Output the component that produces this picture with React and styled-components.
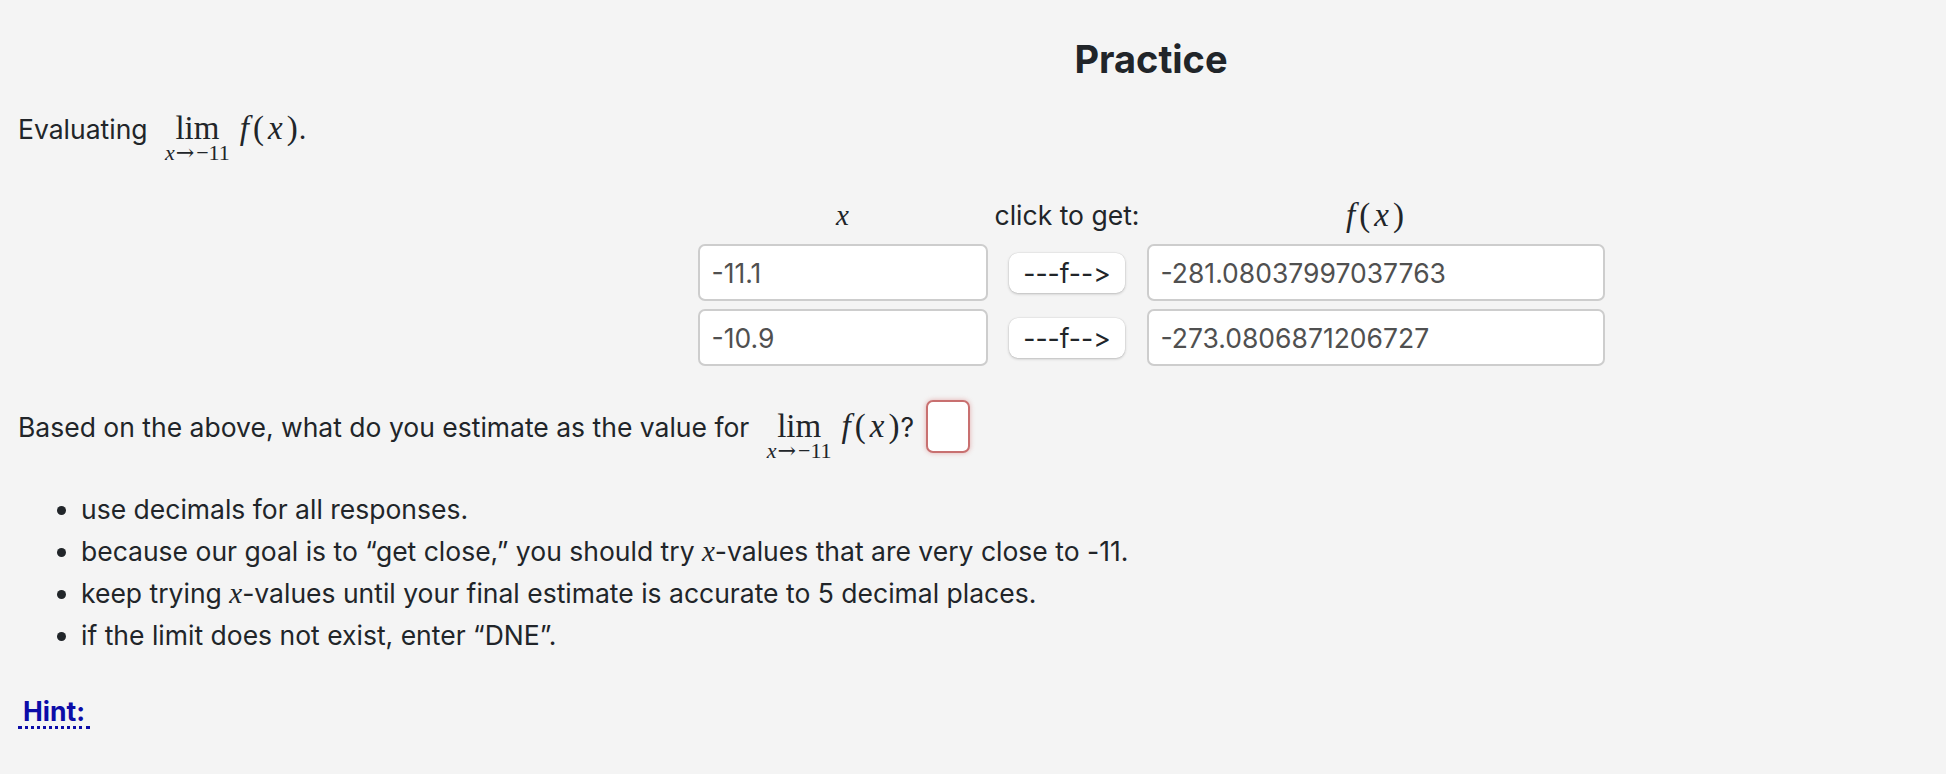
import React from "react";
import styled, { createGlobalStyle } from "styled-components";

const Global = createGlobalStyle`
  body {
    margin: 0;
    padding: 0;
    background: #f4f4f4;
    color: #212529;
    font-family: Inter, "Noto Sans", "Liberation Sans", sans-serif;
    font-size: 26.5px;
    font-feature-settings: "calt" 0, "liga" 0;
    font-variant-ligatures: none;
  }
  * { box-sizing: border-box; }
`

const Page = styled.div`
  padding: 36px 18px 40px 18px;
`

const Title = styled.h1`
  margin: 0;
  padding-left: 356px;
  text-align: center;
  font-size: 38px;
  line-height: 46px;
  font-weight: 700;
`

const Line = styled.div`
  margin-top: ${({ $top }) => $top}px;
  line-height: 40px;
`

const MathText = styled.span`
  font-family: "Liberation Serif", "Times New Roman", serif;
  font-size: 33px;
  letter-spacing: 4px;
  margin-right: -3px;
`

const Var = styled.i`
  font-family: "Liberation Serif", "Times New Roman", serif;
  font-size: ${({ $size }) => $size || "29px"};
  font-style: italic;
`

const LimOp = styled.span`
  display: inline-flex;
  flex-direction: column;
  align-items: center;
  vertical-align: baseline;
  margin: 0 10px 0 10px;
  font-family: "Liberation Serif", "Times New Roman", serif;
`

const LimWord = styled.span`
  font-size: 33px;
  line-height: 30px;
`

const LimSub = styled.span`
  font-size: 22px;
  line-height: 20px;
  white-space: nowrap;
`

const Arrow = styled.span`
  font-family: "DejaVu Serif", serif;
  font-size: 22px;
  margin: 0 2px 0 1px;
`

const Table = styled.div`
  margin-top: 32px;
  padding-left: 356px;
  display: grid;
  justify-content: center;
  grid-template-columns: 290px 145px 458px;
  column-gap: 7px;
  row-gap: 8px;
`

const Head = styled.div`
  text-align: center;
  line-height: 40px;
  white-space: nowrap;
`

const Field = styled.input`
  height: 57px;
  width: 100%;
  border: 2px solid #cdcdcd;
  border-radius: 7px;
  background: #fff;
  padding: 0 12px;
  font-family: inherit;
  font-size: 26.5px;
  color: #505050;
  outline: none;
`

const FButton = styled.button`
  align-self: center;
  justify-self: center;
  width: 116px;
  height: 40px;
  border: none;
  border-radius: 9px;
  background: #fff;
  box-shadow: 0 1px 3px rgba(0, 0, 0, 0.22), 0 0 0 0.5px rgba(0, 0, 0, 0.06);
  font-family: inherit;
  font-size: 26.5px;
  font-feature-settings: "calt" 0, "liga" 0;
  color: #212529;
  padding: 0;
  cursor: pointer;
`

const Answer = styled.input`
  width: 44px;
  height: 53px;
  margin-left: 12px;
  vertical-align: baseline;
  border: 2px solid #c87070;
  border-radius: 7px;
  background: #fff;
  box-shadow: 0 0 5px rgba(200, 70, 70, 0.4);
  font-family: inherit;
  font-size: 26.5px;
  padding: 0 4px;
  outline: none;
`

const List = styled.ul`
  margin: 27px 0 0 0;
  padding-left: 63px;

  li {
    line-height: 42.25px;
  }
`

const HintWrap = styled.div`
  margin-top: 38px;
`

const Hint = styled.span`
  display: inline-block;
  padding: 0 5px;
  font-weight: 700;
  font-size: 26.5px;
  line-height: 30px;
  color: #0c0ca8;
  border-bottom: 3px dotted #0c0ca8;
  cursor: pointer;
`

const Lim = () => (
  <LimOp>
    <LimWord>lim</LimWord>
    <LimSub>
      <i>x</i>
      <Arrow>→</Arrow>−11
    </LimSub>
  </LimOp>
)

const Fx = () => (
  <MathText>
    <i>f</i>(<i>x</i>)
  </MathText>
)

const rows = [
  { x: "-11.1", fx: "-281.08037997037763" },
  { x: "-10.9", fx: "-273.0806871206727" },
]

export default function App() {
  return (
    <Page>
      <Global />
      <Title>Practice</Title>

      <Line $top={26}>
        Evaluating <Lim />
        <Fx />.
      </Line>

      <Table>
        <Head>
          <Var>x</Var>
        </Head>
        <Head>click to get:</Head>
        <Head>
          <Fx />
        </Head>
        {rows.map((r) => (
          <React.Fragment key={r.x}>
            <Field defaultValue={r.x} />
            <FButton>---f--&gt;</FButton>
            <Field defaultValue={r.fx} />
          </React.Fragment>
        ))}
      </Table>

      <Line $top={34}>
        Based on the above, what do you estimate as the value for <Lim />
        <Fx />?
        <Answer />
      </Line>

      <List>
        <li>use decimals for all responses.</li>
        <li>
          because our goal is to “get close,” you should try <Var>x</Var>-values that are very close to -11.
        </li>
        <li>
          keep trying <Var>x</Var>-values until your final estimate is accurate to 5 decimal places.
        </li>
        <li>if the limit does not exist, enter “DNE”.</li>
      </List>

      <HintWrap>
        <Hint>Hint:</Hint>
      </HintWrap>
    </Page>
  )
}
